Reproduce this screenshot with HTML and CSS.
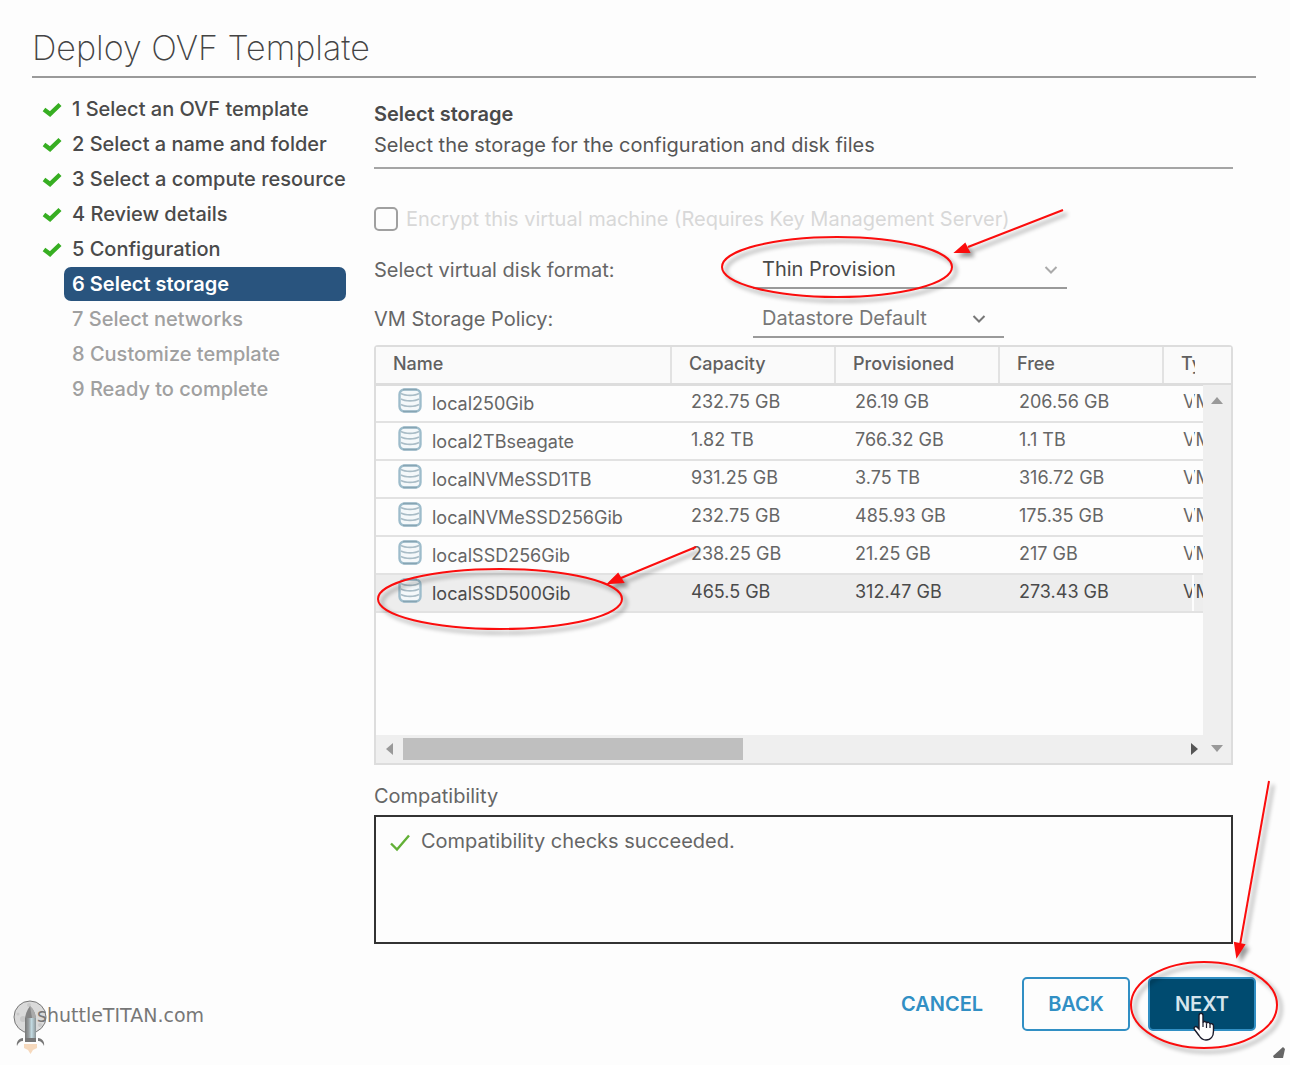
FILE: index.html
```html
<!DOCTYPE html>
<html lang="en">

<head>
  <meta charset="UTF-8">
  <meta name="viewport" content="width=device-width, initial-scale=1.0">
  <title>Deploy OVF Template</title>
  <link rel="stylesheet" href="styles.css">
</head>

<body>
  <!-- Shared icons -->
  <svg class="sprite" aria-hidden="true">
    <symbol id="check" viewBox="0 0 20 16">
      <path d="M2 8.5 L8 13 L18 3.5" fill="none" stroke="#37ae22" stroke-width="4.4" />
    </symbol>
    <symbol id="datastore" viewBox="0 0 24 25">
      <rect x="1.500" y="1.500" width="21" height="22" rx="5" fill="#f4f8fa" stroke="#9dbccb" stroke-width="2.4" />
      <path d="M3 5.500 C7 8 17 8 21 5.500 M3 11 C7 13.500 17 13.500 21 11 M3 16.500 C7 19 17 19 21 16.500" fill="none" stroke="#a9bcc6" stroke-width="1.6" />
      <path d="M5 1.500 H19 M5 23.500 H19" stroke="#87a5b3" stroke-width="1.6" />
    </symbol>
    <symbol id="chevron" viewBox="0 0 14 10">
      <path d="M1.5 2 L7 7.5 L12.5 2" fill="none" stroke="currentColor" stroke-width="2" />
    </symbol>
  </svg>

  <div class="wizard">
    <header class="wizard-header">
      <h1>Deploy OVF Template</h1>
    </header>

    <div class="wizard-body">
      <!-- Steps -->
      <nav aria-label="Steps">
        <ol class="steps">
          <li><svg class="step-check"><use href="#check" /></svg><a class="step" href="#">1 Select an OVF template</a></li>
          <li><svg class="step-check"><use href="#check" /></svg><a class="step" href="#">2 Select a name and folder</a></li>
          <li><svg class="step-check"><use href="#check" /></svg><a class="step" href="#">3 Select a compute resource</a></li>
          <li><svg class="step-check"><use href="#check" /></svg><a class="step" href="#">4 Review details</a></li>
          <li><svg class="step-check"><use href="#check" /></svg><a class="step" href="#">5 Configuration</a></li>
          <li><a class="step current" href="#" aria-current="step">6 Select storage</a></li>
          <li><a class="step pending" href="#">7 Select networks</a></li>
          <li><a class="step pending" href="#">8 Customize template</a></li>
          <li><a class="step pending" href="#">9 Ready to complete</a></li>
        </ol>
      </nav>

      <!-- Storage page -->
      <main>
        <div class="page-title">
          <h2>Select storage</h2>
          <p>Select the storage for the configuration and disk files</p>
        </div>

        <div class="encrypt">
          <input type="checkbox" id="encrypt" disabled>
          <label for="encrypt">Encrypt this virtual machine (Requires Key Management Server)</label>
        </div>

        <div class="field">
          <label for="format">Select virtual disk format:</label>
          <div class="select select-wide">
            <select id="format">
              <option>Thin Provision</option>
            </select>
            <svg class="chevron"><use href="#chevron" /></svg>
            <svg class="callout callout-format" viewBox="0 0 350 100" aria-hidden="true">
              <ellipse cx="117" cy="59" rx="115" ry="30" />
              <path d="M343 2 L248 39" />
              <path class="head" d="M236 44 L245 36 L249 44 Z" />
            </svg>
          </div>
        </div>

        <div class="field">
          <label for="policy">VM Storage Policy:</label>
          <div class="select">
            <select id="policy">
              <option>Datastore Default</option>
            </select>
            <svg class="chevron"><use href="#chevron" /></svg>
          </div>
        </div>

        <div class="datagrid">
          <table>
            <thead>
              <tr>
                <th class="col-name">Name</th>
                <th class="col-size">Capacity</th>
                <th class="col-size">Provisioned</th>
                <th class="col-size">Free</th>
                <th><span class="type-head">Type</span></th>
              </tr>
            </thead>
            <tbody>
              <tr>
                <td><div class="name"><svg><use href="#datastore" /></svg>local250Gib</div></td>
                <td>232.75 GB</td>
                <td>26.19 GB</td>
                <td>206.56 GB</td>
                <td class="type">VMFS</td>
              </tr>
              <tr>
                <td><div class="name"><svg><use href="#datastore" /></svg>local2TBseagate</div></td>
                <td>1.82 TB</td>
                <td>766.32 GB</td>
                <td>1.1 TB</td>
                <td class="type">VMFS</td>
              </tr>
              <tr>
                <td><div class="name"><svg><use href="#datastore" /></svg>localNVMeSSD1TB</div></td>
                <td>931.25 GB</td>
                <td>3.75 TB</td>
                <td>316.72 GB</td>
                <td class="type">VMFS</td>
              </tr>
              <tr>
                <td><div class="name"><svg><use href="#datastore" /></svg>localNVMeSSD256Gib</div></td>
                <td>232.75 GB</td>
                <td>485.93 GB</td>
                <td>175.35 GB</td>
                <td class="type">VMFS</td>
              </tr>
              <tr>
                <td><div class="name"><svg><use href="#datastore" /></svg>localSSD256Gib</div></td>
                <td>238.25 GB</td>
                <td>21.25 GB</td>
                <td>217 GB</td>
                <td class="type">VMFS</td>
              </tr>
              <tr class="selected">
                <td>
                  <div class="name"><svg><use href="#datastore" /></svg>localSSD500Gib
                    <svg class="callout callout-row" viewBox="0 0 330 100" aria-hidden="true">
                      <ellipse cx="125" cy="55" rx="122" ry="30" />
                      <path d="M321 3 L246 34" />
                      <path class="head" d="M234 39 L243 30 L248 38 Z" />
                    </svg>
                  </div>
                </td>
                <td>465.5 GB</td>
                <td>312.47 GB</td>
                <td>273.43 GB</td>
                <td class="type">VMFS</td>
              </tr>
            </tbody>
          </table>
          <div class="scroll-x">
            <span class="arrow arrow-left"></span>
            <span class="thumb"></span>
            <span class="arrow arrow-right"></span>
          </div>
          <div class="scroll-y">
            <span class="arrow arrow-up"></span>
            <span class="arrow arrow-down"></span>
          </div>
        </div>

        <h3>Compatibility</h3>
        <div class="compat">
          <svg class="compat-check" viewBox="0 0 20 18"><path d="M1 9.5 L7 15.5 L19 1.5" fill="none" stroke="#62b036" stroke-width="2.4" /></svg>
          <span>Compatibility checks succeeded.</span>
        </div>
      </main>
    </div>

    <!-- Footer section -->
    <footer>
      <a class="brand" href="#">
        <svg viewBox="0 0 36 56" aria-hidden="true">
          <defs>
            <linearGradient id="hull">
              <stop offset="0" stop-color="#777" />
              <stop offset=".35" stop-color="#9aa0a2" />
              <stop offset=".6" stop-color="#c3dbe2" />
              <stop offset="1" stop-color="#8a9396" />
            </linearGradient>
          </defs>
          <circle cx="17" cy="17" r="16" fill="#dadada" stroke="#777" />
          <circle cx="16" cy="5" r="2" fill="#c9c9c9" />
          <circle cx="10" cy="19" r="3" fill="#c9c9c9" />
          <circle cx="5" cy="14" r="1.5" fill="#c9c9c9" />
          <circle cx="27" cy="25" r="2" fill="#c9c9c9" />
          <path d="M12 18 C13 12 15 9 17 6 C20 9 22 12 23 18 Z" fill="#858585" />
          <path d="M17 6 C20 9 22 12 23 18 H19 Z" fill="#aaa" />
          <path d="M12 18 H23 V42 H12 Z" fill="url(#hull)" />
          <path d="M12 38 H23 V42 H12 Z" fill="#777" />
          <path d="M10 38 V41 C7 41 5 43 4 46 C3 42 6 38 10 38 Z M25 38 V41 C28 41 30 43 31 46 C32 42 29 38 25 38 Z" fill="#777" />
          <path d="M11 44 H24 V48 L20 50 L17.500 54 L15 50 L11 48 Z" fill="#f6d9bd" />
        </svg>
        <span>shuttleTITAN.com</span>
      </a>
      <div class="actions">
        <button type="button" class="btn btn-link">CANCEL</button>
        <button type="button" class="btn">BACK</button>
        <div class="next">
          <button type="button" class="btn btn-primary">NEXT</button>
          <svg class="callout callout-next" viewBox="0 0 160 280" aria-hidden="true">
            <ellipse cx="76" cy="226" rx="73" ry="43" />
            <path d="M141 2 L112 166" />
            <path class="head" d="M109 177 L107 164 L116 166 Z" />
          </svg>
          <svg class="pointer" viewBox="0 0 22 29" aria-hidden="true">
            <path d="M6 17 V3.500 C6 .5 10 .5 10 3.500 V11 C10 9 13.500 9 13.500 11.500 C14 9.500 17 10 17 12.500 C17.500 11 20.500 11.500 20.500 14 V19 C20.500 24 18 28 13 28 C9 28 7.500 26 6 23.500 L1.500 17.500 C0 15 3 13.500 4.500 15.500 Z" fill="#fff" stroke="#1a1a2a" stroke-width="1.4" />
            <path d="M10 11 V15 M13.500 11.500 V16 M17 12.500 V16" stroke="#1a1a2a" stroke-width="1.2" />
          </svg>
        </div>
      </div>
    </footer>
    <svg class="grip" viewBox="0 0 14 12" aria-hidden="true"><path d="M0 9 L10 0 L12 2 L10 11 H1 Z" fill="#666" /></svg>
  </div>
</body>

</html>
```

FILE: styles.css
```css
* {
  box-sizing: border-box;
}

body {
  margin: 0;
  background-color: #fdfdfd;
  color: #666;
  font-family: Inter, "Open Sans", sans-serif;
  font-size: 20px;
  line-height: 30px;
}

h1,
h2,
h3,
p {
  margin: 0;
}

.sprite {
  display: none;
}

/* Wizard frame */
.wizard {
  position: relative;
  min-height: 100vh;
  padding-top: 28px;
}

.wizard-header {
  margin: 0 34px 0 32px;
  padding-bottom: 8px;
  border-bottom: 2px solid #9a9a9a;
}

h1 {
  color: #444;
  font-size: 34px;
  font-weight: 200;
  line-height: 40px;
}

.wizard-body {
  display: flex;
  gap: 28px;
  padding: 13px 57px 0 32px;
}

/* Steps */
nav {
  flex: 0 0 314px;
}

.steps {
  margin: 0;
  padding: 0;
  list-style: none;
}

.steps li {
  display: flex;
  justify-content: flex-end;
  align-items: center;
  height: 35px;
}

.step-check {
  flex: none;
  width: 20px;
  height: 16px;
  margin-right: 2px;
}

.step {
  width: 282px;
  padding-left: 8px;
  border-radius: 7px;
  color: #4a4a4a;
  font-weight: 500;
  line-height: 34px;
  text-decoration: none;
  white-space: nowrap;
}

.step.current {
  background-color: #29547e;
  color: #fff;
  font-weight: 600;
}

.step.pending {
  color: #a0a0a0;
}

/* Storage page */
main {
  flex: 1;
  min-width: 0;
  padding-top: 7px;
}

.page-title {
  padding-bottom: 7px;
  border-bottom: 2px solid #a5a5a5;
  color: #565656;
}

h2 {
  color: #4a4a4a;
  font-size: 20px;
  font-weight: 600;
  line-height: 32px;
}

.encrypt {
  display: flex;
  align-items: center;
  gap: 8px;
  margin: 35px 0 17px;
  color: #d8d8d8;
}

.encrypt input {
  appearance: none;
  width: 24px;
  height: 24px;
  margin: 0;
  border: 2px solid #a0a0a0;
  border-radius: 5px;
}

.field {
  display: flex;
  align-items: center;
  height: 38px;
  margin-bottom: 11px;
}

.field label {
  flex: 0 0 379px;
}

.select {
  position: relative;
  width: 251px;
}

.select-wide {
  width: 314px;
}

.select select {
  appearance: none;
  display: block;
  width: 100%;
  height: 38px;
  padding: 0 40px 0 9px;
  border: 0;
  border-bottom: 2px solid #9a9a9a;
  border-radius: 0;
  background: none;
  color: #777;
  font: inherit;
}

.select-wide select {
  color: #4a4a4a;
}

.chevron {
  position: absolute;
  top: 14px;
  right: 18px;
  width: 14px;
  height: 10px;
  color: #777;
}

.select-wide .chevron {
  right: 9px;
  color: #aaa;
}

/* Datastore grid */
.datagrid {
  position: relative;
  height: 420px;
  margin-top: -4px;
  border: 2px solid #ddd;
  border-radius: 4px 4px 0 0;
  font-size: 18px;
  line-height: 24px;
}

table {
  width: 100%;
  border-collapse: collapse;
  table-layout: fixed;
}

th {
  height: 37px;
  padding: 0 0 1px 17px;
  border-bottom: 3px solid #ddd;
  border-left: 2px solid #e2e2e2;
  background-color: #fafafa;
  color: #606060;
  font-weight: 500;
  text-align: left;
}

th:first-child {
  border-left: 0;
}

.col-name {
  width: 295px;
}

.col-size {
  width: 164px;
}

.type-head {
  display: block;
  width: 14px;
  overflow: hidden;
}

td {
  height: 38px;
  padding: 0 0 2px 20px;
  border-bottom: 2px solid #e2e2e2;
}

td:first-child {
  padding-bottom: 0;
}

.selected {
  background-color: #ededed;
  color: #4a4a4a;
}

.type {
  position: relative;
  overflow: hidden;
}

.type::after {
  content: "";
  position: absolute;
  top: 0;
  bottom: 0;
  left: 29px;
  width: 2px;
  background-color: #fdfdfd;
}

.name {
  position: relative;
  display: flex;
  align-items: center;
  gap: 10px;
  padding: 2px 0 0 2px;
}

.name > svg:first-child {
  flex: none;
  width: 24px;
  height: 25px;
  margin-bottom: 8px;
}

/* Scrollbars */
.scroll-x,
.scroll-y {
  position: absolute;
  right: 0;
  bottom: 0;
  display: flex;
  align-items: center;
  background-color: #efefef;
}

.scroll-x {
  left: 0;
  height: 28px;
  padding: 0 33px 0 10px;
}

.scroll-y {
  top: 38px;
  width: 28px;
  flex-direction: column;
  justify-content: space-between;
  padding: 12px 0 11px;
}

.thumb {
  width: 340px;
  height: 22px;
  margin: 0 auto 0 10px;
  background-color: #bfbfbf;
}

.arrow {
  border: 6px solid transparent;
}

.arrow-left {
  border-right: 7px solid #999;
  border-left: 0;
}

.arrow-right {
  border-right: 0;
  border-left: 7px solid #555;
}

.arrow-up {
  border-top: 0;
  border-bottom: 7px solid #999;
}

.arrow-down {
  border-top: 7px solid #999;
  border-bottom: 0;
}

/* Compatibility */
h3 {
  margin: 16px 0 4px;
  font-size: 20px;
  font-weight: 400;
}

.compat {
  display: flex;
  align-items: flex-start;
  gap: 11px;
  height: 129px;
  padding: 9px 14px;
  border: 2px solid #333;
}

.compat-check {
  width: 20px;
  height: 18px;
  margin-top: 8px;
}

/* Footer */
footer {
  display: flex;
  justify-content: space-between;
  align-items: flex-start;
  padding: 33px 34px 0 13px;
}

.brand {
  display: flex;
  align-items: flex-start;
  margin-top: 23px;
  color: #777;
  font-family: "DejaVu Sans", sans-serif;
  font-size: 19px;
  text-decoration: none;
}

.brand svg {
  width: 36px;
  height: 56px;
  margin-right: -12px;
}

.brand span {
  position: relative;
}

.actions {
  display: flex;
  gap: 18px;
}

.btn {
  width: 108px;
  height: 54px;
  padding: 0;
  border: 2px solid #318fc4;
  border-radius: 5px;
  background-color: #fdfdfd;
  color: #318fc4;
  font-family: inherit;
  font-size: 20px;
  font-weight: 600;
}

.btn-link {
  margin-right: 8px;
  border-color: transparent;
}

.btn-primary {
  background-color: #004b70;
  color: #d5e4ec;
}

.next {
  position: relative;
}

/* Hand-drawn marks over the form */
.callout {
  position: absolute;
  z-index: 2;
  fill: none;
  stroke: #fb0d0d;
  stroke-width: 2;
  filter: drop-shadow(4px 4px 2px rgba(0, 0, 0, 0.4));
  pointer-events: none;
}

.callout .head {
  fill: #fb0d0d;
}

.callout-format {
  top: -43px;
  left: -33px;
  width: 350px;
  height: 100px;
}

.callout-row {
  top: -32px;
  left: -21px;
  width: 330px;
  height: 100px;
}

.callout-next {
  top: -198px;
  left: -20px;
  width: 160px;
  height: 280px;
}

.pointer {
  position: absolute;
  z-index: 3;
  top: 35px;
  left: 45px;
  width: 22px;
  height: 29px;
}

.grip {
  position: absolute;
  right: 3px;
  bottom: 6px;
  width: 14px;
  height: 12px;
}
```
